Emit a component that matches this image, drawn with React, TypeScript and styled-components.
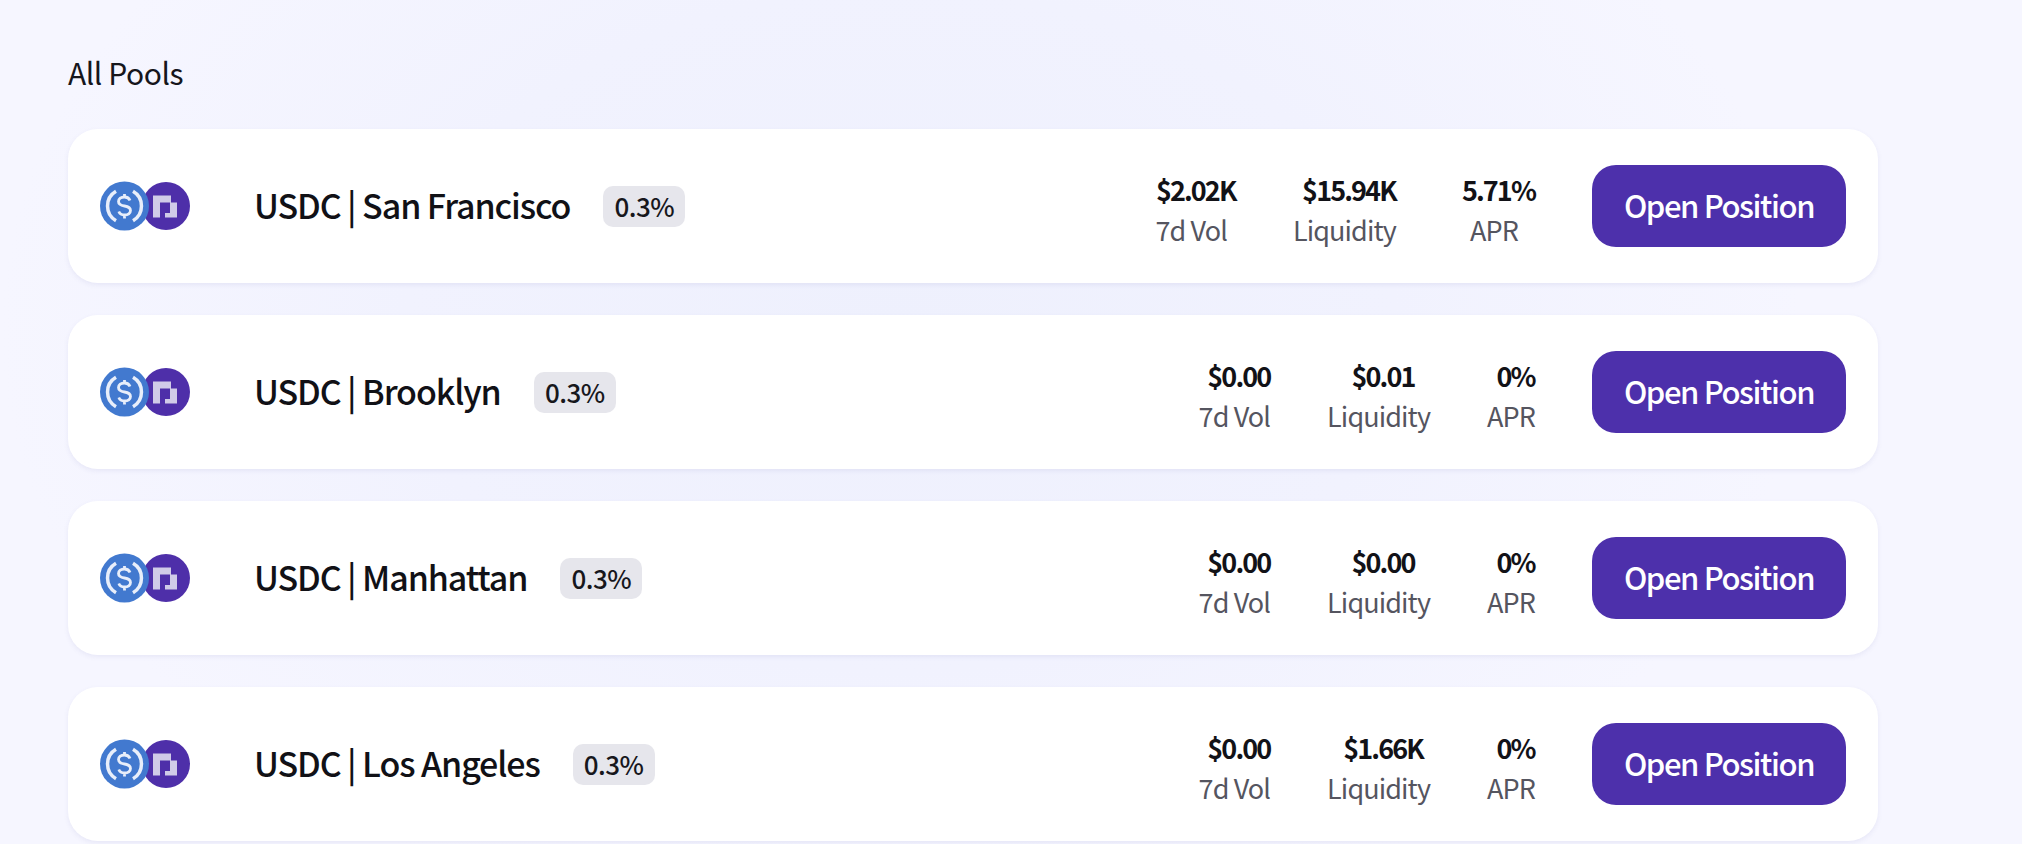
import React from "react";
import styled, { createGlobalStyle } from "styled-components";

const Global = createGlobalStyle`
  html, body { margin: 0; padding: 0; height: 100%; overflow: hidden; }
  body { font-family: "Noto Sans CJK SC", "Noto Sans", sans-serif; }
`;

const Page = styled.main`
  box-sizing: border-box;
  height: 844px;
  overflow: hidden;
  padding: 51px 144px 0 68px;
  background:
    radial-gradient(ellipse 900px 620px at 900px 330px, #eef0fd 0%, #f1f2fe 55%, rgba(246,246,255,0) 100%),
    #f6f6ff;
`;

const Heading = styled.h2`
  margin: 0 0 33px;
  height: 45px;
  font-size: 30px;
  line-height: 42px;
  font-weight: 400;
  letter-spacing: -0.45px;
  color: #16161c;
`;

const List = styled.div`
  display: flex;
  flex-direction: column;
  gap: 32px;
`;

const Card = styled.article`
  display: flex;
  align-items: center;
  justify-content: space-between;
  height: 154px;
  box-sizing: border-box;
  padding: 0 32px;
  background: #ffffff;
  border-radius: 30px;
  box-shadow: 0 2px 5px rgba(88, 88, 170, 0.09);
`;

const PoolInfo = styled.div`
  display: flex;
  align-items: center;
`;

const Logos = styled.svg`
  width: 90px;
  height: 50px;
  flex: none;
  margin-right: 64px;
`;

const Name = styled.div`
  font-size: 34px;
  line-height: 44px;
  font-weight: 500;
  letter-spacing: -1.1px;
  color: #111116;
  margin: 0 33px 2px 0;
`;

const Fee = styled.span`
  display: inline-flex;
  align-items: center;
  justify-content: center;
  box-sizing: border-box;
  height: 41px;
  width: 82px;
  margin-top: 1px;
  padding-bottom: 2px;
  border-radius: 10px;
  background: #e6e6ec;
  font-size: 26px;
  font-weight: 500;
  letter-spacing: -0.55px;
  color: #17171c;
`;

const Actions = styled.div<{ $gap: number }>`
  display: flex;
  align-items: center;
  gap: ${(p) => p.$gap}px;
`;

const Stat = styled.div`
  display: flex;
  flex-direction: column;
  align-items: center;
  gap: 5px;
  padding-top: 7px;
`;

const Value = styled.span`
  font-size: 27px;
  line-height: 35px;
  font-weight: 600;
  letter-spacing: -1.9px;
  color: #121217;
`;

const Label = styled.span`
  margin-right: 9px;
  font-size: 27px;
  line-height: 35px;
  font-weight: 400;
  letter-spacing: -0.9px;
  color: #55555f;
`;

const OpenButton = styled.button`
  flex: none;
  width: 254px;
  height: 82px;
  padding: 0 0 3px;
  border: 0;
  border-radius: 24px;
  background: #4d30ab;
  color: #fff;
  font-family: inherit;
  font-size: 31px;
  font-weight: 500;
  letter-spacing: -1.4px;
`;

const PoolLogos = () => (
  <Logos viewBox="0 0 90 50" aria-hidden>
    <circle cx="66" cy="25" r="24" fill="#4e2fa9" />
    <path d="M53 14.500H71V21.500H77V36.500H65V32H70V21.500H60V36.500H53Z" fill="#d0cbe8" />
    <circle cx="24.500" cy="25" r="24.500" fill="#4279cf" />
    <path d="M16 10.300A17 17 0 0 0 16 39.700" fill="none" stroke="#e8eefa" strokeWidth="3.500" />
    <path d="M33 10.300A17 17 0 0 1 33 39.700" fill="none" stroke="#e8eefa" strokeWidth="3.500" />
    <path
      d="M30 19.500c-1-2.500-3-3.500-5.500-3.500c-3.500 0-6 1.800-6 4.500c0 3 2.800 4 6 4.500c3.200.5 6 1.600 6 4.500c0 2.800-2.500 4.500-6 4.500c-2.600 0-4.700-1-5.700-3.500M24.500 13v3M24.500 34v3.500"
      fill="none"
      stroke="#e8eefa"
      strokeWidth="2.800"
    />
  </Logos>
);

type Pool = { name: string; vol: string; liq: string; apr: string; gap: number };

const pools: Pool[] = [
  { name: "USDC | San Francisco", vol: "$2.02K", liq: "$15.94K", apr: "5.71%", gap: 57 },
  { name: "USDC | Brooklyn", vol: "$0.00", liq: "$0.01", apr: "0%", gap: 48 },
  { name: "USDC | Manhattan", vol: "$0.00", liq: "$0.00", apr: "0%", gap: 48 },
  { name: "USDC | Los Angeles", vol: "$0.00", liq: "$1.66K", apr: "0%", gap: 48 },
];

export default function App() {
  return (
    <Page>
      <Global />
      <Heading>All Pools</Heading>
      <List>
        {pools.map((p) => (
          <Card key={p.name}>
            <PoolInfo>
              <PoolLogos />
              <Name>{p.name}</Name>
              <Fee>0.3%</Fee>
            </PoolInfo>
            <Actions $gap={p.gap}>
              <Stat>
                <Value>{p.vol}</Value>
                <Label>7d Vol</Label>
              </Stat>
              <Stat>
                <Value>{p.liq}</Value>
                <Label>Liquidity</Label>
              </Stat>
              <Stat>
                <Value>{p.apr}</Value>
                <Label>APR</Label>
              </Stat>
              <OpenButton>Open Position</OpenButton>
            </Actions>
          </Card>
        ))}
      </List>
    </Page>
  );
}
